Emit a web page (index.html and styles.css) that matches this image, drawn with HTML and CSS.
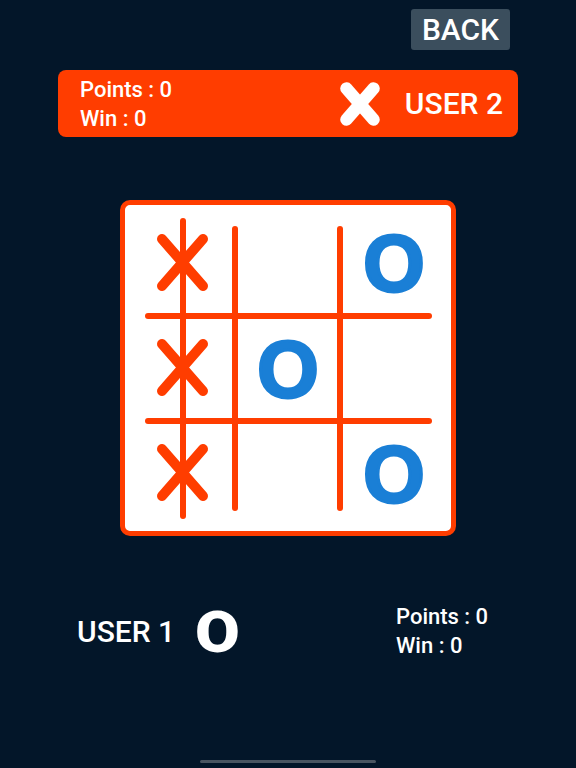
FILE: index.html
```html
<!DOCTYPE html>
<html>
<head>
<meta charset="utf-8">
<link rel="stylesheet" href="styles.css">
</head>
<body>
<div class="screen">
  <div class="topnav">
    <button class="back">BACK</button>
  </div>
  <div class="player-bar">
    <div class="stats">
      <div>Points : 0</div>
      <div>Win : 0</div>
    </div>
    <svg class="x-icon" width="40" height="44" viewBox="0 0 40 44">
      <line x1="6.5" y1="6.5" x2="33.5" y2="37.5" />
      <line x1="33.5" y1="6.5" x2="6.5" y2="37.5" />
    </svg>
    <div class="user-name">USER 2</div>
  </div>
  <div class="board">
    <svg class="grid" width="326" height="326" viewBox="5 5 326 326">
      <g class="lines">
        <line x1="28" y1="116" x2="309" y2="116" />
        <line x1="28" y1="221" x2="309" y2="221" />
        <line x1="115" y1="29" x2="115" y2="308" />
        <line x1="220" y1="29" x2="220" y2="308" />
        <line x1="63" y1="21" x2="63" y2="316" />
      </g>
      <g class="xs">
        <line x1="42" y1="39" x2="83" y2="86" /><line x1="83" y1="39" x2="42" y2="86" />
        <line x1="42" y1="144" x2="83" y2="191" /><line x1="83" y1="144" x2="42" y2="191" />
        <line x1="42" y1="249" x2="83" y2="296" /><line x1="83" y1="249" x2="42" y2="296" />
      </g>
      <g class="os">
        <text x="274" y="91">O</text>
        <text x="168" y="197">O</text>
        <text x="274" y="302">O</text>
      </g>
    </svg>
  </div>
  <div class="bottom">
    <div class="me">
      <span class="user-name">USER 1</span>
      <span class="big-o">O</span>
    </div>
    <div class="stats">
      <div>Points : 0</div>
      <div>Win : 0</div>
    </div>
  </div>
  <div class="home-indicator"></div>
</div>
</body>
</html>
```
FILE: styles.css
```css
html, body {
  margin: 0;
  padding: 0;
  background: #031629;
}
.screen {
  width: 576px;
  height: 768px;
  overflow: hidden;
  font-family: Roboto, "Liberation Sans", sans-serif;
  font-weight: 500;
  color: #fff;
  display: flex;
  flex-direction: column;
}
.topnav {
  display: flex;
  justify-content: flex-end;
  padding: 9px 66px 0 0;
}
.back {
  width: 99px;
  height: 41px;
  padding: 0;
  border: none;
  border-radius: 3px;
  background: #3b4e5d;
  color: #fff;
  font-family: Roboto, "Liberation Sans", sans-serif;
  font-weight: 500;
  font-size: 30px;
  line-height: 41px;
}
.player-bar {
  margin: 20px 0 0 58px;
  width: 460px;
  height: 67px;
  box-sizing: border-box;
  border-radius: 8px;
  background: #ff3d00;
  display: flex;
  align-items: center;
  padding: 0 15px 0 22px;
}
.stats {
  font-size: 22px;
  line-height: 29px;
}
.x-icon {
  margin-left: auto;
  margin-right: 25px;
}
.x-icon line {
  stroke: #fff;
  stroke-width: 12.5;
  stroke-linecap: round;
}
.user-name {
  font-size: 30px;
  line-height: 36px;
}
.board {
  margin: 63px auto 0;
  width: 336px;
  height: 336px;
  box-sizing: border-box;
  border: 5px solid #ff3d00;
  border-radius: 10px;
  background: #fff;
}
.grid {
  display: block;
}
.lines line {
  stroke: #ff3d00;
  stroke-width: 6;
  stroke-linecap: round;
}
.xs line {
  stroke: #ff3d00;
  stroke-width: 10;
  stroke-linecap: round;
}
.os text {
  fill: #1a7fd6;
  stroke: #1a7fd6;
  stroke-width: 3;
  font-family: "Liberation Sans", Arial, sans-serif;
  font-weight: 700;
  font-size: 79px;
  text-anchor: middle;
}
.bottom {
  margin-top: 66px;
  display: flex;
  align-items: center;
  padding: 0 0 0 77px;
}
.me {
  display: flex;
  align-items: center;
  width: 319px;
}
.big-o {
  margin-left: 20px;
  font-size: 58px;
  font-weight: 900;
  line-height: 60px;
  transform: scaleX(1.12);
  transform-origin: left center;
}
.bottom .stats {
  margin-top: -2px;
}
.home-indicator {
  position: fixed;
  left: 200px;
  top: 760px;
  width: 176px;
  height: 3px;
  border-radius: 2px;
  background: #4a5561;
}
```
